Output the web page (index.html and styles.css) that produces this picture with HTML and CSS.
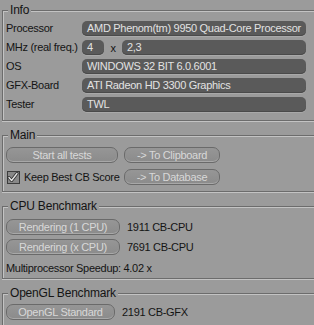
FILE: index.html
```html
<!DOCTYPE html>
<html lang="en">

<head>
    <meta charset="UTF-8">
    <title>Cinebench</title>
    <link rel="stylesheet" href="styles.css">
</head>

<body>
    <fieldset class="group info">
        <legend>Info</legend>
        <div class="rows">
            <span class="label">Processor</span>
            <span class="field">AMD Phenom(tm) 9950 Quad-Core Processor</span>
            <span class="label">MHz (real freq.)</span>
            <span class="mhz">
                <span class="field small">4</span>
                <span class="times">x</span>
                <span class="field grow">2,3</span>
            </span>
            <span class="label">OS</span>
            <span class="field">WINDOWS 32 BIT 6.0.6001</span>
            <span class="label">GFX-Board</span>
            <span class="field">ATI Radeon HD 3300 Graphics</span>
            <span class="label">Tester</span>
            <span class="field">TWL</span>
        </div>
    </fieldset>

    <fieldset class="group main">
        <legend>Main</legend>
        <div class="btn-grid">
            <span class="btn wide">Start all tests</span>
            <span class="btn side">-&gt; To Clipboard</span>
            <label class="check">
                <span class="box">
                    <svg width="12" height="12" viewBox="0 0 12 12">
                        <path d="M2 6.5 L4.6 9.5 L10 2.5" fill="none" stroke="#2e2e2e" stroke-width="3" stroke-linecap="round" stroke-linejoin="round"/>
                        <path d="M2 6.5 L4.6 9.5 L10 2.5" fill="none" stroke="#e4e4e4" stroke-width="1.4" stroke-linecap="round" stroke-linejoin="round"/>
                    </svg>
                </span>
                Keep Best CB Score
            </label>
            <span class="btn side">-&gt; To Database</span>
        </div>
    </fieldset>

    <fieldset class="group cpu">
        <legend>CPU Benchmark</legend>
        <div class="bench">
            <span class="btn render">Rendering (1 CPU)</span>
            <span class="score">1911 CB-CPU</span>
        </div>
        <div class="bench">
            <span class="btn render">Rendering (x CPU)</span>
            <span class="score">7691 CB-CPU</span>
        </div>
        <div class="speedup">Multiprocessor Speedup: 4.02 x</div>
    </fieldset>

    <fieldset class="group gl">
        <legend>OpenGL Benchmark</legend>
        <div class="bench">
            <span class="btn opengl">OpenGL Standard</span>
            <span class="score">2191 CB-GFX</span>
        </div>
    </fieldset>
</body>

</html>
```

FILE: styles.css
```css
html,
body {
    margin: 0;
    height: 100%;
    overflow: hidden;
    background-color: #9b9b9b;
    font-family: "Liberation Sans", Arial, sans-serif;
    font-size: 11px;
    letter-spacing: -0.3px;
    color: #141414;
}

.group {
    margin: 8px 0 0 2px;
    padding: 5px 8px 6px 3px;
    border: 1px solid #6c6c6c;
    border-right: 0;
    box-shadow: inset 1px 1px 0 #c3c3c3, 0 1px 0 #c3c3c3;
    min-width: 0;
}

.group legend {
    padding: 0 2px;
    margin-left: 2px;
    line-height: 13px;
    font-size: 12px;
    letter-spacing: -0.2px;
    background-color: #9b9b9b;
}

.info {
    margin-top: 4px;
    padding-top: 4px;
    padding-bottom: 8px;
}

.rows {
    display: grid;
    grid-template-columns: 76px 1fr;
    row-gap: 4px;
}

.label {
    line-height: 15px;
    white-space: nowrap;
}

.field {
    display: block;
    height: 15px;
    line-height: 15px;
    padding-left: 5px;
    border-radius: 5px;
    background-color: #5a5a5a;
    box-shadow: inset 0 -1px 0 #4a4a4a, 0 1px 0 #a9a9a9;
    color: #e2e2e2;
    white-space: nowrap;
    overflow: hidden;
}

.mhz {
    display: flex;
    align-items: center;
}

.small {
    width: 17px;
}

.times {
    width: 18px;
    text-align: center;
    color: #141414;
}

.grow {
    flex: 1;
}

.main {
    padding-top: 5px;
}

.btn-grid {
    display: grid;
    grid-template-columns: 112px 96px;
    column-gap: 6px;
    row-gap: 6px;
    align-items: center;
}

.btn {
    display: block;
    box-sizing: border-box;
    height: 16px;
    line-height: 14px;
    border: 1px solid #6a6a6a;
    border-radius: 7px;
    background: linear-gradient(#969696, #8b8b8b);
    box-shadow: inset 0 -1px 0 #a8a8a8;
    color: #d8d8d8;
    text-align: center;
    white-space: nowrap;
}

.check {
    display: flex;
    align-items: center;
    gap: 4px;
    white-space: nowrap;
    margin-left: 1px;
}

.box {
    display: block;
    width: 11px;
    height: 11px;
    border: 1px solid #3c3c3c;
    background-color: #888888;
}

.box svg {
    display: block;
    margin: -1px 0 0 -1px;
}

.cpu {
    padding-top: 6px;
    padding-bottom: 3px;
}

.bench {
    display: flex;
    align-items: center;
    gap: 7px;
    margin-bottom: 4px;
}

.render {
    width: 114px;
}

.opengl {
    width: 109px;
}

.speedup {
    margin-top: 7px;
    line-height: 13px;
}

.gl {
    padding-top: 4px;
}
```
